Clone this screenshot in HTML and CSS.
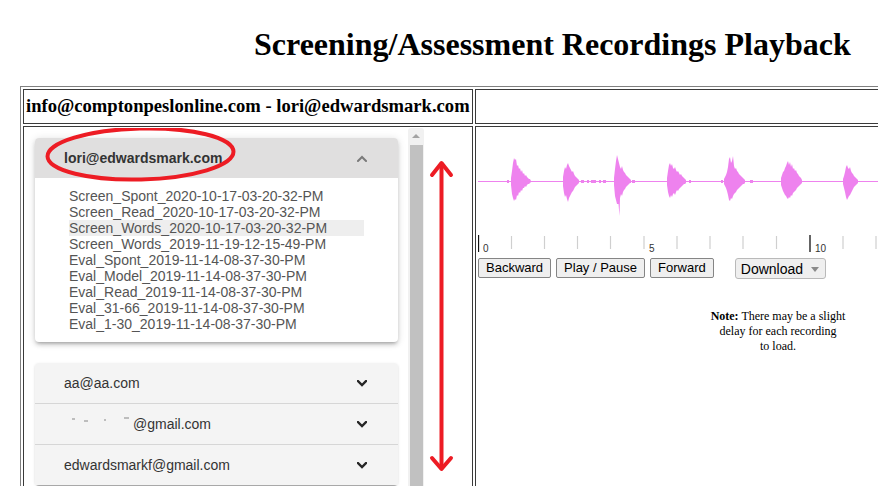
FILE: index.html
```html
<!DOCTYPE html>
<html>
<head>
<meta charset="utf-8">
<title>Screening/Assessment Recordings Playback</title>
<link rel="stylesheet" href="styles.css">
</head>
<body>
<h1 class="title">Screening/Assessment Recordings Playback</h1>
<div class="frame">
<table class="layout">
  <tr>
    <td class="who">info@comptonpeslonline.com - lori@edwardsmark.com</td>
    <td class="blank"></td>
  </tr>
  <tr>
    <td class="list-cell">
      <div class="list-wrap">
        <div class="scroller">
          <div class="card open">
            <div class="card-head">
              <span>lori@edwardsmark.com</span>
              <svg class="chev up" width="10" height="7" viewBox="0 0 10 7"><polyline points="1,6 5,2 9,6"/></svg>
            </div>
            <div class="card-body">
              <div class="rec">Screen_Spont_2020-10-17-03-20-32-PM</div>
              <div class="rec">Screen_Read_2020-10-17-03-20-32-PM</div>
              <div class="rec hl">Screen_Words_2020-10-17-03-20-32-PM</div>
              <div class="rec">Screen_Words_2019-11-19-12-15-49-PM</div>
              <div class="rec">Eval_Spont_2019-11-14-08-37-30-PM</div>
              <div class="rec">Eval_Model_2019-11-14-08-37-30-PM</div>
              <div class="rec">Eval_Read_2019-11-14-08-37-30-PM</div>
              <div class="rec">Eval_31-66_2019-11-14-08-37-30-PM</div>
              <div class="rec">Eval_1-30_2019-11-14-08-37-30-PM</div>
            </div>
          </div>
          <div class="group">
            <div class="card closed">
              <div class="card-head">
                <span>aa@aa.com</span>
                <svg class="chev down" width="10" height="7" viewBox="0 0 10 7"><polyline points="1,1 5,5 9,1"/></svg>
              </div>
            </div>
            <div class="card closed">
              <div class="card-head">
                <span><span class="redact"><i class="frag f1"></i><i class="frag f2"></i><i class="frag f3"></i><i class="frag f4"></i></span>@gmail.com</span>
                <svg class="chev down" width="10" height="7" viewBox="0 0 10 7"><polyline points="1,1 5,5 9,1"/></svg>
              </div>
            </div>
            <div class="card closed">
              <div class="card-head">
                <span>edwardsmarkf@gmail.com</span>
                <svg class="chev down" width="10" height="7" viewBox="0 0 10 7"><polyline points="1,1 5,5 9,1"/></svg>
              </div>
            </div>
          </div>
        </div>
        <div class="scrollbar">
          <div class="sb-up"></div>
          <div class="sb-thumb"></div>
        </div>
        <svg class="marks" width="446" height="360" viewBox="25 128 446 360">
          <ellipse cx="140.5" cy="154" rx="93" ry="25.5" transform="rotate(-1.5 140.5 154)"/>
          <line x1="441.5" y1="164" x2="441.5" y2="468"/>
          <polyline points="432,175 441.5,163 451,175"/>
          <polyline points="432,458 441.5,469 451,458"/>
        </svg>
      </div>
    </td>
    <td class="player">
      <svg class="wave" width="400" height="128" viewBox="478 128 400 128">
        <rect x="478" y="181" width="400" height="1" fill="#ee82ee"/>
        <g fill="#ee82ee">
          <polygon points="511,178 512,171 513,163 514,158 515,160 516,159 517,166 518,165 519,169 520,168 521,172 522,170 523,174 524,173 525,176 526,175 527,177 528,178 529,179 530,179 531,181 531,182 530,183 529,184 528,184 527,185 526,187 525,186 524,188 523,188 522,191 521,190 520,193 519,192 518,196 517,195 516,200 515,199 514,201 513,198 512,194 511,185"/>
          <polygon points="563,177 564,171 565,167 566,169 567,165 568,163 569,166 570,168 571,170 572,172 573,171 574,174 575,176 576,177 577,178 578,179 579,180 579,183 578,184 577,185 576,186 575,187 574,189 573,191 572,192 571,194 570,196 569,198 568,202 567,199 566,195 565,197 564,193 563,186"/>
          <polygon points="614,178 615,169 616,161 617,155 618,159 619,163 620,167 621,169 622,166 623,170 624,172 625,173 626,175 627,176 628,177 629,178 630,179 631,180 631,183 630,183 629,184 628,185 627,186 626,187 625,189 624,190 623,192 622,196 621,194 620,198 619.5,216 618.5,204 617,204 616,200 615,196 614,185"/>
          <polygon points="667,178 668,171 669,165 670,163 671,166 672,164 673,168 674,169 675,167 676,170 677,172 678,171 679,173 680,175 681,174 682,176 683,177 684,178 685,179 686,180 686,183 685,184 684,184 683,185 682,186 681,187 680,188 679,189 678,191 677,190 676,192 675,195 674,193 673,194 672,197 671,195 670,198 669,196 668,192 667,185"/>
          <polygon points="724,179 725,177 726,175 727,172 728,167 729,159 730,157 731,163 732,161 733,156 734,166 735,169 736,168 737,171 738,172 739,174 740,175 741,176 742,177 743,178 744,179 745,180 745,183 744,184 743,184 742,185 741,186 740,187 739,188 738,189 737,190 736,192 735,193 734,194 733,196 732,199 731,198 730,201 729,200 728,195 727,191 726,188 725,186 724,184"/>
          <polygon points="781,178 782,175 783,172 784,171 785,168 786,166 787,163 788,161 789,165 790,162 791,167 792,164 793,169 794,168 795,171 796,170 797,173 798,174 799,176 800,177 801,178 802,180 802,183 801,184 800,185 799,186 798,187 797,188 796,190 795,191 794,192 793,193 792,196 791,195 790,198 789,197 788,199 787,198 786,196 785,195 784,193 783,191 782,188 781,185"/>
          <polygon points="843,179 844,176 845,172 846,167 847,165 848,168 849,169 850,167 851,171 852,173 853,174 854,176 855,177 856,178 857,179 858,180 858,183 857,184 856,185 855,186 854,187 853,189 852,191 851,193 850,195 849,196 848,198 847,200 846,197 845,192 844,188 843,184"/>
          <rect x="507" y="180" width="2" height="3"/>
          <rect x="581" y="180" width="3" height="3"/>
          <rect x="587" y="180" width="2" height="3"/>
          <rect x="591" y="180" width="5" height="3"/>
          <rect x="599" y="180" width="2" height="3"/>
          <rect x="603" y="180" width="3" height="3"/>
          <rect x="632" y="180" width="3" height="3"/>
          <rect x="689" y="180" width="2" height="3"/>
          <rect x="721" y="180" width="2" height="3"/>
          <rect x="750" y="180" width="3" height="3"/>
        </g>
        <g stroke="#cfcfcf" stroke-width="1.2">
          <line x1="511.5" y1="236" x2="511.5" y2="249"/>
          <line x1="544.5" y1="236" x2="544.5" y2="249"/>
          <line x1="577.5" y1="236" x2="577.5" y2="249"/>
          <line x1="610.5" y1="236" x2="610.5" y2="249"/>
          <line x1="644" y1="236" x2="644" y2="249"/>
          <line x1="677" y1="236" x2="677" y2="249"/>
          <line x1="710" y1="236" x2="710" y2="249"/>
          <line x1="743" y1="236" x2="743" y2="249"/>
          <line x1="776.5" y1="236" x2="776.5" y2="249"/>
          <line x1="843" y1="236" x2="843" y2="249"/>
          <line x1="876" y1="236" x2="876" y2="249"/>
        </g>
        <g stroke="#111" stroke-width="1.3">
          <line x1="478.5" y1="235" x2="478.5" y2="252"/>
          <line x1="810" y1="235" x2="810" y2="252"/>
        </g>
        <g class="tl-label">
          <text x="483" y="252">0</text>
          <text x="649" y="252">5</text>
          <text x="815" y="252">10</text>
        </g>
      </svg>
      <div class="controls">
        <button class="btn">Backward</button>
        <button class="btn">Play / Pause</button>
        <button class="btn">Forward</button>
        <span class="dl">Download</span>
      </div>
      <div class="note"><b>Note:</b> There may be a slight<br>delay for each recording<br>to load.</div>
    </td>
  </tr>
</table>
</div>
</body>
</html>
```
FILE: styles.css
```css
html, body {
  margin: 0;
  padding: 0;
  overflow: hidden;
  background: #fff;
}
body {
  width: 878px;
  height: 486px;
  font-family: "Liberation Serif", "Times New Roman", serif;
  color: #000;
}
.title {
  margin: 26px 0 23px 254px;
  font-size: 32px;
  line-height: 37px;
  font-weight: bold;
  white-space: nowrap;
}
.frame {
  margin-left: 20px;
  width: 858px;
  height: 400px;
  overflow: hidden;
}
.layout {
  width: 866px;
  table-layout: fixed;
  border: 1px solid #808080;
  border-collapse: separate;
  border-spacing: 2px;
}
.layout td {
  border: 1px solid #3a3a3a;
  padding: 1px;
  vertical-align: top;
}
.layout td.who {
  width: 445px;
  padding: 4px 1px 6px 2px;
  font-size: 18.6px;
  line-height: 23px;
  font-weight: bold;
  white-space: nowrap;
}
.list-wrap {
  position: relative;
  display: flex;
  height: 360px;
}
.scroller {
  width: 383px;
  box-sizing: border-box;
  padding: 10px;
  overflow: hidden;
  font-family: "Liberation Sans", Arial, sans-serif;
  font-size: 14px;
  color: #333;
}
.card-head {
  height: 40px;
  display: flex;
  align-items: center;
  justify-content: space-between;
  padding: 0 31px 0 29px;
}
.card.open {
  background: #fff;
  border-radius: 4px;
  box-shadow: 0 3px 3px -2px rgba(0,0,0,.2), 0 3px 4px 0 rgba(0,0,0,.14), 0 1px 8px 0 rgba(0,0,0,.12);
}
.open .card-head {
  background: #e0dfdf;
  border-radius: 4px 4px 0 0;
  font-weight: bold;
}
.card-body {
  padding: 10px 34px;
}
.rec {
  line-height: 16px;
  color: #555;
  white-space: nowrap;
}
.rec.hl {
  background: #eeeeee;
}
.group {
  margin-top: 21px;
  border-radius: 4px;
  box-shadow: 0 2px 1px -1px rgba(0,0,0,.2), 0 1px 1px 0 rgba(0,0,0,.14), 0 1px 3px 0 rgba(0,0,0,.12);
}
.group .card {
  background: #f4f4f4;
}
.group .card:first-child {
  border-radius: 4px 4px 0 0;
}
.group .card + .card {
  border-top: 1px solid #d6d6d6;
}
.chev {
  display: block;
  fill: none;
  stroke-width: 2;
  stroke-linecap: square;
}
.chev.up {
  stroke: #7a7a7a;
}
.chev.down {
  stroke: #262626;
  stroke-width: 2.3;
}
.redact {
  display: inline-block;
  position: relative;
  width: 69px;
  height: 14px;
  vertical-align: -2px;
}
.frag {
  position: absolute;
  top: 1px;
  height: 2px;
  background: #bdbdbd;
}
.frag.f1 { left: 8px; width: 3px; }
.frag.f2 { left: 20px; width: 4px; top: 3px; }
.frag.f3 { left: 40px; width: 2px; top: 2px; }
.frag.f4 { left: 60px; width: 5px; top: 0; }
.scrollbar {
  position: relative;
  width: 16px;
  background: #f1f1f1;
  border-radius: 3px 3px 0 0;
}
.sb-up {
  position: absolute;
  left: 4px;
  top: 6px;
  width: 0;
  height: 0;
  border-left: 4px solid transparent;
  border-right: 4px solid transparent;
  border-bottom: 4px solid #a3a3a3;
}
.sb-thumb {
  position: absolute;
  left: 2px;
  right: 1px;
  top: 17px;
  bottom: 0;
  background: #c1c1c1;
}
.marks {
  position: absolute;
  left: 0;
  top: 0;
  pointer-events: none;
  fill: none;
  stroke: #ed1c24;
  stroke-width: 4;
  stroke-linecap: round;
  stroke-linejoin: round;
}
.layout td.player {
  padding-left: 2px;
  border-right: none;
}
.wave {
  display: block;
}
.tl-label text {
  font-family: "Liberation Sans", Arial, sans-serif;
  font-size: 10px;
  fill: #333;
}
.controls {
  display: flex;
  align-items: flex-start;
  gap: 5px;
  margin-top: 2px;
}
.btn {
  font-family: "Liberation Sans", Arial, sans-serif;
  font-size: 13px;
  line-height: 16px;
  height: 20px;
  padding: 1px 7px;
  background: #efefef;
  border: 1px solid #858585;
  border-radius: 2px;
  color: #000;
}
.dl {
  position: relative;
  margin-left: 16px;
  width: 91px;
  height: 21px;
  box-sizing: border-box;
  padding: 2px 0 0 5px;
  font-family: "Liberation Sans", Arial, sans-serif;
  font-size: 14px;
  line-height: 17px;
  background: #efefef;
  border: 1px solid #b9b9b9;
  border-radius: 3px;
  color: #000;
}
.dl::after {
  content: "";
  position: absolute;
  right: 6px;
  top: 8px;
  border-left: 4px solid transparent;
  border-right: 4px solid transparent;
  border-top: 5px solid #8a8a8a;
}
.note {
  margin: 30px 0 0 230px;
  width: 140px;
  text-align: center;
  font-size: 12px;
  line-height: 15px;
  white-space: nowrap;
}
```
